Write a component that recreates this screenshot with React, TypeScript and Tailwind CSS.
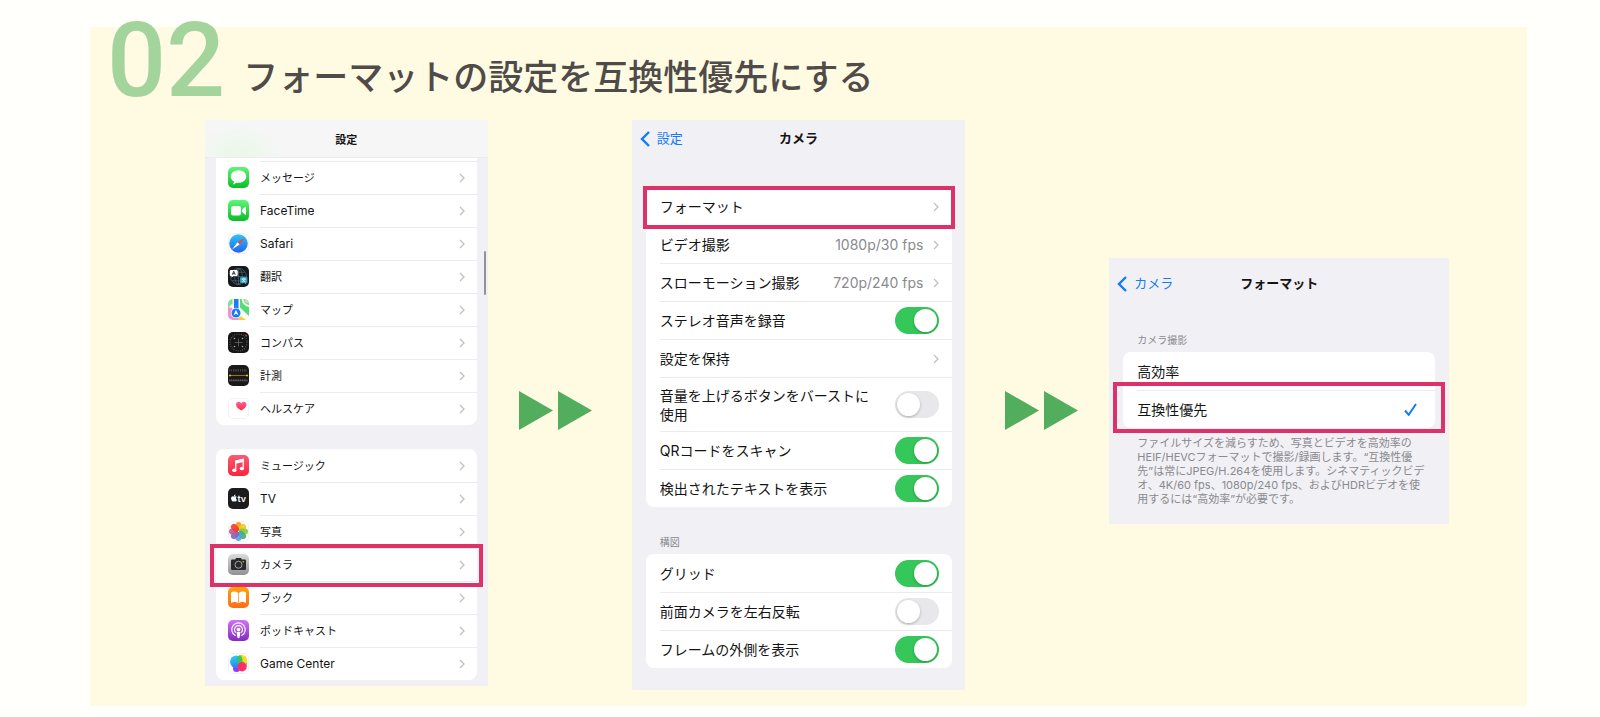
import React, { useState } from "react";
import { FaApple } from "react-icons/fa";

type AppRow = { label: string; icon: React.ReactNode; latin?: boolean; highlight?: boolean };

function IconBase({ children }: { children: React.ReactNode }) {
  return (
    <svg viewBox="0 0 42 42" aria-hidden="true" className="h-[21px] w-[21px] shrink-0 overflow-hidden rounded-[5px]">
      {children}
    </svg>
  );
}

const WhiteTile = () => (
  <rect x="0.5" y="0.5" width="41" height="41" rx="9.5" fill="#fff" stroke="#dcdce0" />
);

function MessagesIcon() {
  return (
    <IconBase>
      <linearGradient id="messages" x1="0" y1="0" x2="0" y2="1">
        <stop offset="0" stopColor="#5df777" />
        <stop offset="1" stopColor="#0abc28" />
      </linearGradient>
      <rect width="42" height="42" fill="url(#messages)" />
      <path d="M21 6.500C12.300 6.500 5.500 12 5.500 19c0 4.600 2.700 8.400 6.800 10.600-.3 1.900-1.200 3.500-2.700 4.700 3.100 0 5.600-1.200 7.500-3 1.200.2 2.600.3 3.900.3 8.700 0 15.500-5.600 15.500-12.600S29.700 6.500 21 6.500z" fill="#fff" />
    </IconBase>
  );
}

function FaceTimeIcon() {
  return (
    <IconBase>
      <linearGradient id="facetime" x1="0" y1="0" x2="0" y2="1">
        <stop offset="0" stopColor="#5df777" />
        <stop offset="1" stopColor="#0abc28" />
      </linearGradient>
      <rect width="42" height="42" fill="url(#facetime)" />
      <rect x="6" y="12" width="20" height="19" rx="4.500" fill="#fff" />
      <path d="M28 19.500l6-5.500c1-.9 2-.4 2 1v13c0 1.400-1 1.900-2 1l-6-5.500z" fill="#fff" />
    </IconBase>
  );
}

function SafariIcon() {
  return (
    <IconBase>
      <linearGradient id="safari" x1="0" y1="0" x2="0" y2="1">
        <stop offset="0" stopColor="#2fc4fb" />
        <stop offset="1" stopColor="#2464e6" />
      </linearGradient>
      <WhiteTile />
      <circle cx="21" cy="21" r="18.500" fill="url(#safari)" />
      <path d="M34 9L19 18.500l4.200 4.500z" fill="#f2453a" />
      <path d="M8 33l11-14.500 4.200 4.500z" fill="#fff" />
    </IconBase>
  );
}

function TranslateIcon() {
  return (
    <IconBase>
      <rect width="42" height="42" fill="#16181b" />
      <g fill="none" stroke="#4b7382" strokeWidth="1.300">
        <circle cx="21" cy="21" r="16" />
        <ellipse cx="21" cy="21" rx="7.500" ry="16" />
        <path d="M21 5v32M5 21h32M8 12.500h26M8 29.500h26" />
      </g>
      <path d="M6 8h11a2.500 2.500 0 0 1 2.500 2.500v7A2.500 2.500 0 0 1 17 20h-6l-4 3v-3H6a2.500 2.500 0 0 1-2.500-2.500v-7A2.500 2.500 0 0 1 6 8z" fill="#fff" />
      <path d="M8.500 17.500l3-7 3 7M9.500 15.300h4" fill="none" stroke="#222" strokeWidth="1.700" />
      <path d="M26.500 22h10a2.500 2.500 0 0 1 2.500 2.500v7a2.500 2.500 0 0 1-2.500 2.500v3l-4-3h-6a2.500 2.500 0 0 1-2.500-2.500v-7a2.500 2.500 0 0 1 2.500-2.500z" fill="#2ba4be" />
      <path d="M27 26h9M31.500 24v2M34 26c-1 3-3 5-6.500 6M29 26c1 3 3 5 6.500 6" fill="none" stroke="#fff" strokeWidth="1.500" />
    </IconBase>
  );
}

function MapsIcon() {
  return (
    <IconBase>
      <rect width="42" height="42" fill="#f3f3f0" />
      <path d="M0 0h9v9L0 18z" fill="#7fe18f" />
      <path d="M0 16c10 1 20 12 22 26H0z" fill="#f48fd0" />
      <path d="M20 42l3-8 14 8z" fill="#fccb2b" />
      <path d="M24 0h18v34L24 17z" fill="#57dc75" />
      <path d="M29 0c1 8 6 13 13 14" fill="none" stroke="#f3f3f0" strokeWidth="4" />
      <path d="M35 0c0 4 3 7 7 7" fill="none" stroke="#d6d6d6" strokeWidth="4" />
      <path d="M7 12l35 30" fill="none" stroke="#fff" strokeWidth="5" />
      <rect x="12" width="9" height="20" fill="#1d7cf7" />
      <circle cx="16" cy="28" r="10.500" fill="#fff" />
      <circle cx="16" cy="28" r="9" fill="#137bfd" />
      <path d="M16 21.500l5 11-5-3-5 3z" fill="#fff" />
    </IconBase>
  );
}

function CompassIcon() {
  return (
    <IconBase>
      <rect width="42" height="42" fill="#161616" />
      <circle cx="21" cy="21" r="17" fill="none" stroke="#858585" strokeWidth="2.500" strokeDasharray="1.200 3.250" />
      <path d="M21 13v16M13 21h16" stroke="#777" strokeWidth="1.300" />
      <g fill="#aaa">
        <circle cx="13" cy="13" r="1.600" />
        <circle cx="29" cy="13" r="1.600" />
        <circle cx="13" cy="29" r="1.600" />
        <circle cx="29" cy="29" r="1.600" />
      </g>
      <path d="M33 5l5 1-1 4z" fill="#f3392e" />
    </IconBase>
  );
}

function MeasureIcon() {
  return (
    <IconBase>
      <rect width="42" height="42" fill="#191919" />
      <path d="M3 10.500h36" stroke="#777" strokeWidth="4.500" strokeDasharray="1 2.600" />
      <path d="M2 31.500h38" stroke="#777" strokeWidth="1.200" />
      <path d="M3 29.500h36" stroke="#777" strokeWidth="3.500" strokeDasharray="1 2.600" />
      <path d="M4 21h34" stroke="#b98c12" strokeWidth="1.600" />
      <circle cx="4" cy="21" r="2" fill="#f9cb21" />
      <circle cx="38" cy="21" r="2" fill="#f9cb21" />
    </IconBase>
  );
}

function HealthIcon() {
  return (
    <IconBase>
      <linearGradient id="health" x1="0" y1="0" x2="0" y2="1">
        <stop offset="0" stopColor="#fb5fb4" />
        <stop offset="1" stopColor="#fd2d2f" />
      </linearGradient>
      <WhiteTile />
      <path d="M26.500 25C21.500 22 16 18.200 16 13 16 9.800 18.400 7.500 21.300 7.500c2.200 0 4.100 1.200 5.200 3 1.100-1.800 3-3 5.200-3C34.600 7.500 37 9.800 37 13c0 5.200-5.500 9-10.500 12z" fill="url(#health)" />
    </IconBase>
  );
}

function MusicIcon() {
  return (
    <IconBase>
      <linearGradient id="music" x1="0" y1="0" x2="0" y2="1">
        <stop offset="0" stopColor="#fb5c74" />
        <stop offset="1" stopColor="#fa233b" />
      </linearGradient>
      <rect width="42" height="42" fill="url(#music)" />
      <path d="M15.500 29V12l15-3.500v17" fill="none" stroke="#fff" strokeWidth="2.600" />
      <path d="M15.500 11.500l15-3.500v6l-15 3.500z" fill="#fff" />
      <ellipse cx="12.700" cy="30.500" rx="4.300" ry="3.700" fill="#fff" />
      <ellipse cx="27.700" cy="27" rx="4.300" ry="3.700" fill="#fff" />
    </IconBase>
  );
}

function TvIcon() {
  return (
    <IconBase>
      <rect width="42" height="42" fill="#1c1c1e" />
      <FaApple x="4" y="12" width="15" height="16" color="#fff" />
      <text x="19" y="27" fill="#fff" fontSize="18" fontWeight="600" className="font-['Inter',sans-serif]">
        tv
      </text>
    </IconBase>
  );
}

const PETALS = [
  { angle: 0, color: "#fb951a" },
  { angle: 45, color: "#e3d01c" },
  { angle: 90, color: "#8cc63a" },
  { angle: 135, color: "#41ab80" },
  { angle: 180, color: "#4fa3df" },
  { angle: 225, color: "#7668ba" },
  { angle: 270, color: "#bf559c" },
  { angle: 315, color: "#f03e2c" },
];

function PhotosIcon() {
  return (
    <IconBase>
      <WhiteTile />
      {PETALS.map(({ angle, color }) => (
        <rect
          key={angle}
          x="15"
          y="2"
          width="12"
          height="18"
          rx="6"
          fill={color}
          fillOpacity="0.900"
          transform={`rotate(${angle} 21 21)`}
        />
      ))}
    </IconBase>
  );
}

function CameraIcon() {
  return (
    <IconBase>
      <linearGradient id="camera" x1="0" y1="0" x2="0" y2="1">
        <stop offset="0" stopColor="#dcdcdd" />
        <stop offset="1" stopColor="#909095" />
      </linearGradient>
      <rect width="42" height="42" fill="url(#camera)" />
      <path d="M8.500 11H14l2.500-3h9l2.500 3h5.500a2.500 2.500 0 0 1 2.500 2.500v16a2.500 2.500 0 0 1-2.500 2.500h-25A2.500 2.500 0 0 1 6 29.500v-16A2.500 2.500 0 0 1 8.500 11z" fill="#29292b" />
      <circle cx="21" cy="21.500" r="7" fill="none" stroke="#b9b9bb" strokeWidth="1.700" />
      <circle cx="30.500" cy="15.500" r="1.500" fill="#f5c32c" />
    </IconBase>
  );
}

function BooksIcon() {
  return (
    <IconBase>
      <linearGradient id="books" x1="0" y1="0" x2="0" y2="1">
        <stop offset="0" stopColor="#ffa30a" />
        <stop offset="1" stopColor="#fb6d1b" />
      </linearGradient>
      <rect width="42" height="42" fill="url(#books)" />
      <path d="M20.300 12.500c-2.500-4-11.300-4.500-14.300-.5V32c4-2.600 11.300-2.400 14.300.5z" fill="#fff" />
      <path d="M21.700 12.500c2.500-4 11.300-4.500 14.300-.5V32c-4-2.600-11.300-2.400-14.300.5z" fill="#fff" />
    </IconBase>
  );
}

function PodcastsIcon() {
  return (
    <IconBase>
      <linearGradient id="podcasts" x1="0" y1="0" x2="0" y2="1">
        <stop offset="0" stopColor="#d56ffa" />
        <stop offset="1" stopColor="#832bc1" />
      </linearGradient>
      <rect width="42" height="42" fill="url(#podcasts)" />
      <g fill="none" stroke="#fff" strokeWidth="2.200" strokeLinecap="round">
        <path d="M14.500 31a13.500 13.500 0 1 1 13 0" />
        <path d="M15.500 25a8 8 0 1 1 11 0" />
      </g>
      <circle cx="21" cy="19" r="3.700" fill="#fff" />
      <path d="M17.500 26c0-2 1.500-2.500 3.500-2.500s3.500.5 3.500 2.500l-1.200 8.500c-.2 1.300-1 2-2.300 2s-2.100-.7-2.300-2z" fill="#fff" />
    </IconBase>
  );
}

function GameCenterIcon() {
  return (
    <IconBase>
      <linearGradient id="gc-blue" x1="0" y1="0" x2="0.300" y2="1">
        <stop offset="0" stopColor="#35d3f7" />
        <stop offset="1" stopColor="#2585f5" />
      </linearGradient>
      <WhiteTile />
      <circle cx="17" cy="31" r="7" fill="#8f3df5" />
      <circle cx="27.500" cy="14" r="10.500" fill="#fbdc1c" />
      <circle cx="16.500" cy="17.500" r="12.500" fill="url(#gc-blue)" />
      <path d="M18 13c0-4 3-8 6-9 3 2.500 5 6 5 10 0 5-2.500 9-6.500 12-3-3-4.500-8-4.500-13z" fill="#35c759" />
      <path d="M25 24a10 10 0 0 0 13-8c2 6-1 12-6 12z" fill="#7ddc3c" />
      <circle cx="28" cy="27.500" r="9.500" fill="#fb2d6b" />
    </IconBase>
  );
}

const appRows: AppRow[] = [
  { label: "メッセージ", icon: <MessagesIcon /> },
  { label: "FaceTime", icon: <FaceTimeIcon />, latin: true },
  { label: "Safari", icon: <SafariIcon />, latin: true },
  { label: "翻訳", icon: <TranslateIcon /> },
  { label: "マップ", icon: <MapsIcon /> },
  { label: "コンパス", icon: <CompassIcon /> },
  { label: "計測", icon: <MeasureIcon /> },
  { label: "ヘルスケア", icon: <HealthIcon /> },
];

const mediaRows: AppRow[] = [
  { label: "ミュージック", icon: <MusicIcon /> },
  { label: "TV", icon: <TvIcon />, latin: true },
  { label: "写真", icon: <PhotosIcon /> },
  { label: "カメラ", icon: <CameraIcon />, highlight: true },
  { label: "ブック", icon: <BooksIcon /> },
  { label: "ポッドキャスト", icon: <PodcastsIcon /> },
  { label: "Game Center", icon: <GameCenterIcon />, latin: true },
];

function Chevron() {
  return (
    <svg viewBox="0 0 6 10" aria-hidden="true" className="h-[10px] w-[6px] shrink-0">
      <path d="M1 1l4 4-4 4" fill="none" stroke="#c0c0c3" strokeWidth="1.300" />
    </svg>
  );
}

function AppRowItem({ row }: { row: AppRow }) {
  return (
    <li className="group relative">
      <a href="#" className="flex items-center gap-[11px] pl-3">
        {row.icon}
        <span className="flex h-[33px] flex-1 items-center justify-between border-t border-[#ebebed] pr-3 group-first:border-[var(--first-line)]">
          <span className={row.latin ? "text-[12px]" : "text-[11px]"}>{row.label}</span>
          <Chevron />
        </span>
      </a>
      {row.highlight && (
        <span className="pointer-events-none absolute -inset-x-[6px] -top-1 -bottom-[6px] z-10 border-4 border-[#dd3168]" />
      )}
    </li>
  );
}

function SettingsScreen() {
  return (
    <article className="relative min-w-0 flex-[283] bg-[#f1f0f5] pb-[6px]">
      <header className="flex h-[38px] items-center justify-center border-b border-[#ececee] bg-[#f6f6f6] bg-[radial-gradient(ellipse_45px_34px_at_34px_36px,#e9f8e9,transparent)] pt-1">
        <h2 className="text-[11px] font-bold">設定</h2>
      </header>
      <ul className="mx-[11px] rounded-b-lg bg-white pt-[3px] [--first-line:#ebebed]">
        {appRows.map((row) => (
          <AppRowItem key={row.label} row={row} />
        ))}
      </ul>
      <ul className="mx-[11px] mt-6 rounded-lg bg-white [--first-line:transparent]">
        {mediaRows.map((row) => (
          <AppRowItem key={row.label} row={row} />
        ))}
      </ul>
      <span className="absolute top-[131px] right-[2px] h-[44px] w-[2px] rounded-full bg-[#939396]" />
    </article>
  );
}

function NavBar({ back, title }: { back: string; title: string }) {
  return (
    <header className="grid h-[38px] grid-cols-[1fr_auto_1fr] items-center px-2">
      <a href="#" className="flex items-center gap-[7px] text-[13px] text-[#107cfb]">
        <svg viewBox="0 0 10 16" aria-hidden="true" className="h-4 w-[10px]">
          <path d="M9 1L2 8l7 7" fill="none" stroke="#107cfb" strokeWidth="2.400" />
        </svg>
        {back}
      </a>
      <h2 className="text-[13px] font-bold">{title}</h2>
    </header>
  );
}

function Toggle({ id, defaultOn = false }: { id: string; defaultOn?: boolean }) {
  const [on, setOn] = useState(defaultOn);

  return (
    <input
      id={id}
      type="checkbox"
      role="switch"
      checked={on}
      onChange={(e) => setOn(e.target.checked)}
      className="flex h-[27px] w-11 shrink-0 cursor-pointer appearance-none items-center rounded-full bg-[#e8e8ea] px-[2px] before:h-[23px] before:w-[23px] before:rounded-full before:bg-white before:shadow-[0_1px_3px_rgba(0,0,0,0.25)] checked:justify-end checked:bg-[#35c759]"
    />
  );
}

type CameraRowProps = {
  label: React.ReactNode;
  value?: string;
  toggle?: string;
  on?: boolean;
  tall?: boolean;
  highlight?: boolean;
};

function CameraRow({ label, value, toggle, on, tall, highlight }: CameraRowProps) {
  const rowClass = `ml-[14px] flex items-center justify-between border-t border-[#ebebed] pr-[13px] text-[14px] group-first:border-transparent ${
    tall ? "h-[54px] leading-[19px]" : "h-[38px]"
  }`;

  return (
    <li className="group relative">
      {toggle ? (
        <div className={rowClass}>
          <label htmlFor={toggle}>{label}</label>
          <Toggle id={toggle} defaultOn={on} />
        </div>
      ) : (
        <a href="#" className={rowClass}>
          <span>{label}</span>
          <span className="flex items-center gap-[10px] text-[#8a8a8e]">
            {value}
            <Chevron />
          </span>
        </a>
      )}
      {highlight && (
        <span className="pointer-events-none absolute -inset-x-[3px] -top-[1px] -bottom-1 z-10 border-4 border-[#dd3168]" />
      )}
    </li>
  );
}

function CameraScreen() {
  return (
    <article className="min-w-0 flex-[334] bg-[#f1f0f5] pb-[22px]">
      <NavBar back="設定" title="カメラ" />
      <ul className="mr-[13px] ml-[14px] mt-[29px] rounded-lg bg-white">
        <CameraRow label="フォーマット" highlight />
        <CameraRow label="ビデオ撮影" value="1080p/30 fps" />
        <CameraRow label="スローモーション撮影" value="720p/240 fps" />
        <CameraRow label="ステレオ音声を録音" toggle="stereo" on />
        <CameraRow label="設定を保持" />
        <CameraRow
          label={
            <>
              音量を上げるボタンをバーストに
              <br />
              使用
            </>
          }
          toggle="burst"
          tall
        />
        <CameraRow label="QRコードをスキャン" toggle="qr" on />
        <CameraRow label="検出されたテキストを表示" toggle="text" on />
      </ul>
      <h3 className="px-7 pt-[27px] pb-1 text-[10px] leading-4 text-[#8a8a8e]">構図</h3>
      <ul className="mr-[13px] ml-[14px] rounded-lg bg-white">
        <CameraRow label="グリッド" toggle="grid" on />
        <CameraRow label="前面カメラを左右反転" toggle="mirror" />
        <CameraRow label="フレームの外側を表示" toggle="frame" on />
      </ul>
    </article>
  );
}

const formats = [
  { id: "efficient", label: "高効率" },
  { id: "compatible", label: "互換性優先", highlight: true },
];

function FormatScreen() {
  const [format, setFormat] = useState("compatible");

  return (
    <article className="mb-7 min-w-0 flex-[340] self-center bg-[#f1f0f5] pt-[7px] pb-[18px]">
      <NavBar back="カメラ" title="フォーマット" />
      <h3 className="px-7 pt-[29px] pb-1 text-[10px] leading-4 text-[#8a8a8e]">カメラ撮影</h3>
      <ul className="mx-[14px] rounded-lg bg-white">
        {formats.map(({ id, label, highlight }) => (
          <li key={id} className="group relative">
            <label className="ml-[14px] flex h-[38px] items-center justify-between border-t border-[#ebebed] pr-[18px] text-[14px] group-first:border-transparent">
              {label}
              <input
                type="radio"
                name="format"
                checked={format === id}
                onChange={() => setFormat(id)}
                className="sr-only"
              />
              {format === id && (
                <svg viewBox="0 0 13 13" aria-hidden="true" className="h-[13px] w-[13px]">
                  <path d="M1 7.500l3.700 4.300L12 1" fill="none" stroke="#107cfb" strokeWidth="2" />
                </svg>
              )}
            </label>
            {highlight && (
              <span className="pointer-events-none absolute -inset-x-[10px] -top-2 -bottom-[5px] border-4 border-[#dd3168]" />
            )}
          </li>
        ))}
      </ul>
      <p className="pt-2 pl-7 text-[11px] leading-[14px] whitespace-nowrap text-[#8a8a8e]">
        ファイルサイズを減らすため、写真とビデオを高効率の
        <br />
        HEIF/HEVCフォーマットで撮影/録画します。“互換性優
        <br />
        先”は常にJPEG/H.264を使用します。シネマティックビデ
        <br />
        オ、4K/60 fps、1080p/240 fps、およびHDRビデオを使
        <br />
        用するには“高効率”が必要です。
      </p>
    </article>
  );
}

function NextArrow({ className }: { className: string }) {
  return (
    <div className={`flex w-36 shrink-0 self-center pt-[11px] ${className}`}>
      <svg viewBox="0 0 73 39" aria-hidden="true" className="h-[39px] w-[73px]">
        <path d="M0 0l34 19.500L0 39zM39 0l34 19.500L39 39z" fill="#52ad5c" />
      </svg>
    </div>
  );
}

export default function App() {
  return (
    <main
      lang="ja"
      className="flow-root min-h-screen bg-[#fffffc] font-['Inter','Noto_Sans_CJK_JP',sans-serif] text-[#141414]"
    >
      <section className="mt-[27px] mr-[73px] ml-[90px] flex flex-col bg-[#fffae2] pb-4">
        <header className="flex items-end gap-[18px] pb-[7px] pl-[17px]">
          <span className="-mt-[18px] font-['Roboto',sans-serif] text-[104px] leading-none font-medium text-[#a3d49b]">
            02
          </span>
          <h1 className="mb-[21px] font-['Noto_Sans_CJK_JP',sans-serif] text-[35px] leading-none font-medium text-[#4f4b48]">
            フォーマットの設定を互換性優先にする
          </h1>
        </header>
        <div className="flex items-start pr-[78px] pl-[115px]">
          <SettingsScreen />
          <NextArrow className="pl-[31px]" />
          <CameraScreen />
          <NextArrow className="justify-end pr-[31px]" />
          <FormatScreen />
        </div>
      </section>
    </main>
  );
}
